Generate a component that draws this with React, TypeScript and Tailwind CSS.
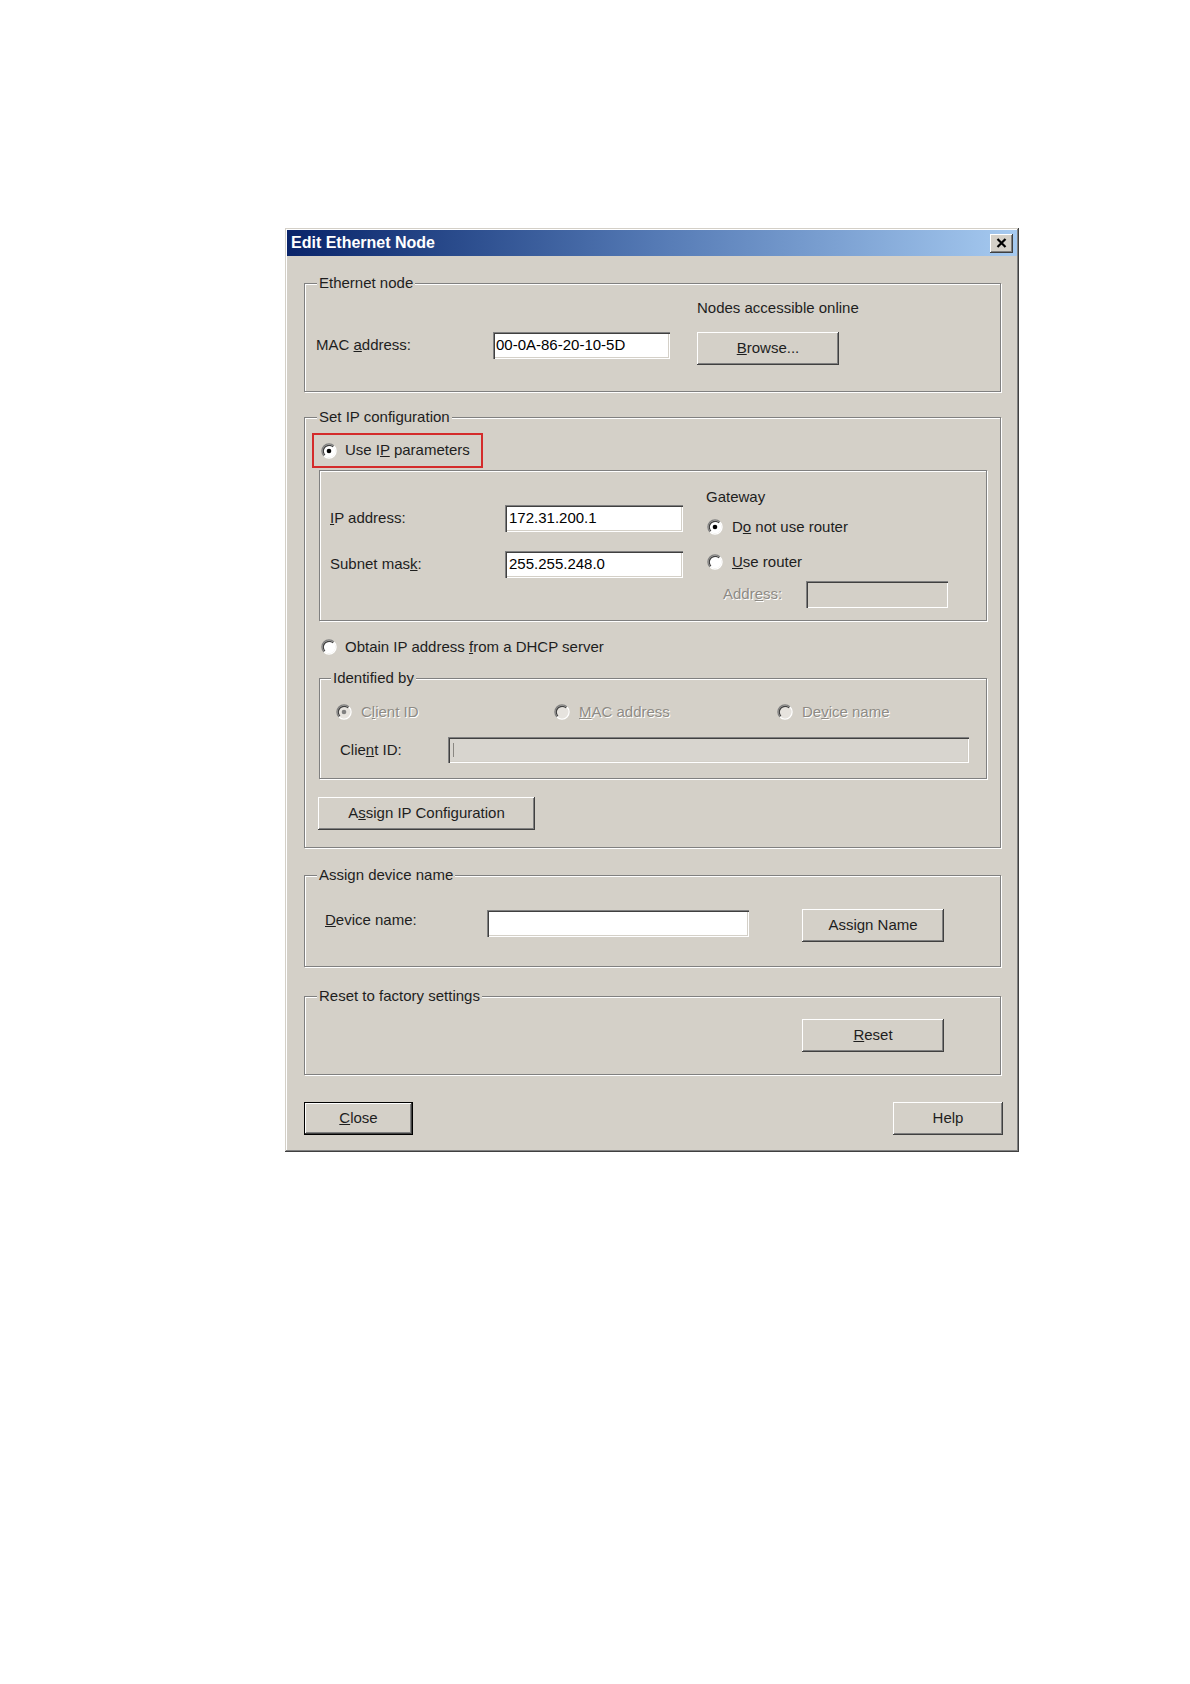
import type { ReactNode } from 'react';

const raised =
  'bg-[#d4d0c8] shadow-[inset_-1px_-1px_0_#404040,inset_1px_1px_0_#ffffff,inset_-2px_-2px_0_#808080]';
const sunken =
  'shadow-[inset_1px_1px_0_#808080,inset_2px_2px_0_#404040,inset_-1px_-1px_0_#ffffff,inset_-2px_-2px_0_#d4d0c8]';
const etched = 'border border-[#808080] shadow-[inset_1px_1px_0_#ffffff,1px_1px_0_#ffffff]';
const disabledText = 'text-[#8e8b85] [text-shadow:1px_1px_0_#ffffff]';

interface RadioProps {
  checked?: boolean;
  disabled?: boolean;
}

const Radio = ({ checked = false, disabled = false }: RadioProps) => (
  <svg width="16" height="16" viewBox="0 0 16 16" className="shrink-0">
    <circle cx="8" cy="8" r="6.5" fill={disabled ? '#e6e3de' : '#ffffff'} />
    <path d="M13 3A7.07 7.07 0 0 0 3 13" fill="none" stroke="#808080" strokeWidth="1.3" />
    <path d="M12.1 3.9A5.8 5.8 0 0 0 3.9 12.1" fill="none" stroke="#404040" strokeWidth="1.2" />
    <path d="M3 13A7.07 7.07 0 0 0 13 3" fill="none" stroke="#ffffff" strokeWidth="1.3" />
    {checked && <circle cx="8" cy="8" r="2.3" fill={disabled ? '#808080' : '#000000'} />}
  </svg>
);

interface ButtonProps {
  children: ReactNode;
  className?: string;
}

const Button = ({ children, className = '' }: ButtonProps) => (
  <button
    type="button"
    className={`${raised} h-[33px] flex items-center justify-center text-[15px] text-[#1e1e1e] ${className}`}
  >
    {children}
  </button>
);

interface GroupProps {
  label: string;
  className?: string;
  legendClass?: string;
  children: ReactNode;
}

const Group = ({ label, className = '', legendClass = 'left-[12px]', children }: GroupProps) => (
  <div className={`relative ${etched} ${className}`}>
    <span className={`absolute top-[-10px] ${legendClass} px-[2px] bg-[#d4d0c8] leading-[18px] whitespace-nowrap`}>
      {label}
    </span>
    {children}
  </div>
);

export default function App() {
  return (
    <div className="min-h-[1684px] bg-white pt-[228px] pl-[285px] font-['Liberation_Sans',Arial,sans-serif] text-[15px] text-[#1e1e1e]">
      <div className="w-[734px] h-[924px] p-[2px] flex flex-col bg-[#d4d0c8] shadow-[inset_-1px_-1px_0_#404040,inset_1px_1px_0_#d4d0c8,inset_-2px_-2px_0_#808080,inset_2px_2px_0_#ffffff]">
        {/* Title bar */}
        <div className="h-[26px] shrink-0 flex items-center justify-between px-[4px] bg-linear-to-r from-[#0a246a] via-[#5479b4] to-[#a6caf0]">
          <span className="text-white font-bold text-[16px] leading-none">Edit Ethernet Node</span>
          <button type="button" className={`${raised} w-[23px] h-[19px] flex items-center justify-center`}>
            <svg width="11" height="10" viewBox="0 0 11 10">
              <path d="M1.5 1L9.5 9M9.5 1L1.5 9" stroke="#000000" strokeWidth="2.2" />
            </svg>
          </button>
        </div>

        {/* Body */}
        <div className="pt-[27px] pl-[17px] pr-[16px] flex flex-col">
          {/* Ethernet node */}
          <Group label="Ethernet node" className="h-[109px] pt-[15px] pl-[11px]">
            <div className="flex items-start">
              <div className="mt-[33px] flex items-center">
                <span className="w-[177px]">
                  MAC <u>a</u>ddress:
                </span>
                <div className={`${sunken} bg-white w-[177px] h-[27px] pl-[3px] flex items-center text-black`}>
                  00-0A-86-20-10-5D
                </div>
              </div>
              <div className="ml-[27px] flex flex-col">
                <span className="leading-[18px]">Nodes accessible online</span>
                <Button className="mt-[15px] w-[142px]">
                  <u>B</u>rowse...
                </Button>
              </div>
            </div>
          </Group>

          {/* Set IP configuration */}
          <Group label="Set IP configuration" className="mt-[25px] h-[431px] pt-[15px] pl-[7px]">
            <div className="w-[171px] h-[35px] border-2 border-[#d42b2b] flex items-center pl-[7px]">
              <Radio checked />
              <span className="ml-[8px]">
                Use I<u>P</u> parameters
              </span>
            </div>

            <div className={`mt-[2px] ml-[7px] w-[668px] h-[151px] flex ${etched}`}>
              <div className="pl-[10px] pt-[34px]">
                <div className="flex items-center">
                  <span className="w-[175px]">
                    <u>I</u>P address:
                  </span>
                  <div className={`${sunken} bg-white w-[178px] h-[27px] pl-[4px] flex items-center text-black`}>
                    172.31.200.1
                  </div>
                </div>
                <div className="mt-[19px] flex items-center">
                  <span className="w-[175px]">
                    Subnet mas<u>k</u>:
                  </span>
                  <div className={`${sunken} bg-white w-[178px] h-[27px] pl-[4px] flex items-center text-black`}>
                    255.255.248.0
                  </div>
                </div>
              </div>

              <div className="ml-[23px] pt-[17px] flex flex-col">
                <span className="leading-[18px]">Gateway</span>
                <div className="mt-[12px] h-[18px] flex items-center pl-[1px]">
                  <Radio checked />
                  <span className="ml-[9px]">
                    D<u>o</u> not use router
                  </span>
                </div>
                <div className="mt-[17px] h-[18px] flex items-center pl-[1px]">
                  <Radio />
                  <span className="ml-[9px]">
                    <u>U</u>se router
                  </span>
                </div>
                <div className="mt-[10px] h-[27px] flex items-center">
                  <span className={`ml-[17px] w-[83px] ${disabledText}`}>
                    Addr<u>e</u>ss:
                  </span>
                  <div className={`${sunken} bg-[#d4d0c8] w-[142px] h-[27px]`} />
                </div>
              </div>
            </div>

            <div className="mt-[17px] h-[18px] flex items-center pl-[9px]">
              <Radio />
              <span className="ml-[8px]">
                Obtain IP address <u>f</u>rom a DHCP server
              </span>
            </div>

            <Group label="Identified by" legendClass="left-[11px]" className="mt-[22px] ml-[7px] w-[668px] h-[101px] pt-[24px] pl-[16px]">
              <div className="h-[18px] flex items-center">
                <div className="w-[218px] flex items-center">
                  <Radio checked disabled />
                  <span className={`ml-[9px] ${disabledText}`}>
                    C<u>l</u>ient ID
                  </span>
                </div>
                <div className="w-[223px] flex items-center">
                  <Radio disabled />
                  <span className={`ml-[9px] ${disabledText}`}>
                    <u>M</u>AC address
                  </span>
                </div>
                <div className="flex items-center">
                  <Radio disabled />
                  <span className={`ml-[9px] ${disabledText}`}>
                    De<u>v</u>ice name
                  </span>
                </div>
              </div>
              <div className="mt-[16px] pl-[4px] flex items-center">
                <span className="w-[108px]">
                  Clie<u>n</u>t ID:
                </span>
                <div className={`${sunken} bg-[#d8d5cf] w-[521px] h-[26px] pl-[5px] flex items-center`}>
                  <span className="w-px h-[14px] bg-[#8a8782]" />
                </div>
              </div>
            </Group>

            <Button className="mt-[18px] ml-[6px] w-[217px]">
              A<u>s</u>sign IP Configuration
            </Button>
          </Group>

          {/* Assign device name */}
          <Group label="Assign device name" className="mt-[27px] h-[92px] pt-[33px] pl-[20px]">
            <div className="flex items-start">
              <span className="mt-[1px] w-[162px] leading-[20px]">
                <u>D</u>evice name:
              </span>
              <div className={`${sunken} mt-[1px] bg-white w-[262px] h-[27px]`} />
              <Button className="ml-[53px] w-[142px]">Assign Name</Button>
            </div>
          </Group>

          {/* Reset to factory settings */}
          <Group label="Reset to factory settings" className="mt-[29px] h-[79px] pt-[22px] pl-[497px]">
            <Button className="w-[142px]">
              <u>R</u>eset
            </Button>
          </Group>

          {/* Footer buttons */}
          <div className="mt-[27px] mr-[-2px] flex justify-between">
            <Button className="w-[109px] border border-black">
              <u>C</u>lose
            </Button>
            <Button className="w-[110px]">Help</Button>
          </div>
        </div>
      </div>
    </div>
  );
}
